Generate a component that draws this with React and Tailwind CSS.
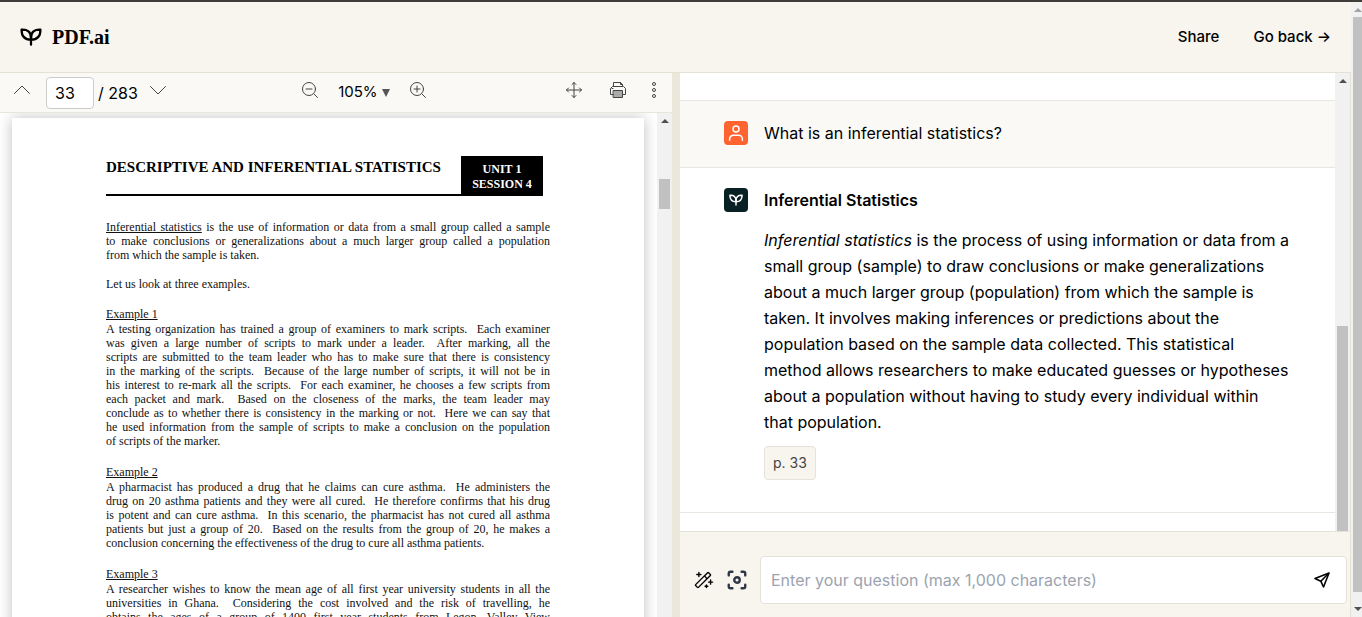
import { Focus } from 'lucide-react'
import { PiMagicWand } from 'react-icons/pi'

const intro = [
  'to make conclusions or generalizations about a much larger group called a population',
  'from which the sample is taken.',
]

const examples = [
  {
    title: 'Example 1',
    lines: [
      'A testing organization has trained a group of examiners to mark scripts.\u00a0 Each examiner',
      'was given a large number of scripts to mark under a leader.\u00a0 After marking, all the',
      'scripts are submitted to the team leader who has to make sure that there is consistency',
      'in the marking of the scripts.\u00a0 Because of the large number of scripts, it will not be in',
      'his interest to re-mark all the scripts.\u00a0 For each examiner, he chooses a few scripts from',
      'each packet and mark.\u00a0 Based on the closeness of the marks, the team leader may',
      'conclude as to whether there is consistency in the marking or not.\u00a0 Here we can say that',
      'he used information from the sample of scripts to make a conclusion on the population',
      'of scripts of the marker.',
    ],
    ends: true,
  },
  {
    title: 'Example 2',
    lines: [
      'A pharmacist has produced a drug that he claims can cure asthma.\u00a0 He administers the',
      'drug on 20 asthma patients and they were all cured.\u00a0 He therefore confirms that his drug',
      'is potent and can cure asthma.\u00a0 In this scenario, the pharmacist has not cured all asthma',
      'patients but just a group of 20.\u00a0 Based on the results from the group of 20, he makes a',
      'conclusion concerning the effectiveness of the drug to cure all asthma patients.',
    ],
    ends: true,
  },
  {
    title: 'Example 3',
    lines: [
      'A researcher wishes to know the mean age of all first year university students in all the',
      'universities in Ghana.\u00a0 Considering the cost involved and the risk of travelling, he',
      'obtains the ages of a group of 1400 first year students from Legon, Valley View',
    ],
    ends: false,
  },
]

function Sprout({ className }) {
  return (
    <svg viewBox="0 0 24 20" fill="none" stroke="currentColor" strokeWidth="2.5" strokeLinecap="round" strokeLinejoin="round" className={className}>
      <path d="M12 18.5V9" />
      <path d="M12 13C5 13 1.5 9.5 1.5 1.9C8 1.4 12 4.500 12 10.5" />
      <path d="M12 13C19 13 22.5 9.5 22.5 1.9C16 1.4 12 4.500 12 10.5" />
    </svg>
  )
}

function UserIcon() {
  return (
    <svg viewBox="0 0 24 24" fill="none" stroke="currentColor" strokeWidth="2" strokeLinecap="round" className="size-[18px]">
      <circle cx="12" cy="6.5" r="4" />
      <path d="M3.5 21.500V20a5 5 0 0 1 5-5h7a5 5 0 0 1 5 5v1.5" />
    </svg>
  )
}

function SendIcon() {
  return (
    <svg viewBox="0 0 16 16" fill="none" stroke="currentColor" strokeWidth="1.6" strokeLinejoin="round" className="size-4">
      <path d="M15 1L1 6.500L6.800 9.200L9.500 15Z" />
      <path d="M15 1L6.800 9.200" />
    </svg>
  )
}

function ToolIcon({ children }) {
  return (
    <svg viewBox="0 0 16 16" fill="none" stroke="currentColor" strokeWidth="1" strokeLinecap="round" strokeLinejoin="round" className="size-4">
      {children}
    </svg>
  )
}

function Arrow({ className }) {
  return (
    <svg viewBox="0 0 8 4" fill="currentColor" className={className}>
      <path d="M0 4L4 0L8 4Z" />
    </svg>
  )
}

function Line({ justify, children }) {
  return <span className={`block whitespace-nowrap ${justify ? '[text-align-last:justify]' : ''}`}>{children}</span>
}

function Header() {
  return (
    <header className="flex h-[71px] shrink-0 items-center justify-between border-b border-[#e5e2d5] bg-[#f8f5ee] px-5">
      <a href="#" className="flex items-center gap-2.5">
        <Sprout className="h-[18px] w-[22px]" />
        <span className="font-['Liberation_Serif',serif] text-[20px] font-bold">PDF.ai</span>
      </a>
      <nav className="flex items-center gap-[34px] text-[15px] font-medium">
        <a href="#">Share</a>
        <a href="#">Go back →</a>
      </nav>
    </header>
  )
}

function Toolbar() {
  return (
    <div className="flex h-10 shrink-0 items-center justify-between border-b border-[#e8e5da] bg-[#faf9f6] px-3.5 text-[#444]">
      <div className="flex items-center">
        <button aria-label="Previous page" className="pb-1.5">
          <ToolIcon><path d="M0.500 11.500L8 4L15.500 11.500" /></ToolIcon>
        </button>
        <input aria-label="Page" defaultValue="33" className="ml-4 h-8 w-12 rounded border border-[#ccc] bg-white px-2 text-black" />
        <span className="ml-1 text-black">/ 283</span>
        <button aria-label="Next page" className="ml-3 pb-1.5">
          <ToolIcon><path d="M0.500 4.500L8 12L15.500 4.500" /></ToolIcon>
        </button>
      </div>
      <div className="flex items-center pr-1">
        <button aria-label="Zoom out" className="pb-1.5">
          <ToolIcon><circle cx="7" cy="7" r="6.500" /><path d="M12 12L15.500 15.500M4 7H10" /></ToolIcon>
        </button>
        <button className="ml-5 flex items-center gap-1 text-[15px] text-black">
          105%
          <svg viewBox="0 0 8 8" fill="#555" className="size-2"><path d="M0 0H8L4 8Z" /></svg>
        </button>
        <button aria-label="Zoom in" className="ml-5 pb-1.5">
          <ToolIcon><circle cx="7" cy="7" r="6.500" /><path d="M12 12L15.500 15.500M4 7H10M7 4V10" /></ToolIcon>
        </button>
      </div>
      <div className="flex items-center">
        <button aria-label="Pan" className="pb-1.5">
          <ToolIcon><path d="M8 0.500V15.500M0.500 8H15.500M6 2.500L8 0.500L10 2.500M6 13.500L8 15.500L10 13.500M2.500 6L0.500 8L2.500 10M13.500 6L15.500 8L13.500 10" /></ToolIcon>
        </button>
        <button aria-label="Print" className="ml-7 pb-1.5">
          <ToolIcon>
            <path d="M3.500 4.500V0.500H10.500L12.500 2.500V4.500M10.500 0.500V2.500H12.500M3.500 12.500H0.500V6.500L2.500 4.500H13.500L15.500 6.500V12.500H12.500M2 6.500H3" />
            <path d="M3.500 8.500H12.500V15.500H3.500Z" fill="#aaa" />
          </ToolIcon>
        </button>
        <button aria-label="More" className="ml-6 pb-1.5">
          <svg viewBox="0 0 8 16" fill="none" stroke="currentColor" className="h-4 w-2">
            <circle cx="4" cy="2" r="1.500" />
            <circle cx="4" cy="8" r="1.500" />
            <circle cx="4" cy="14" r="1.500" />
          </svg>
        </button>
      </div>
    </div>
  )
}

function PdfPage() {
  return (
    <article className="ml-3 h-[900px] w-[632px] shrink-0 bg-white px-[94px] pt-[38px] font-['Liberation_Serif',serif] text-[12px] leading-[14px] text-[#111] shadow-[0_0_14px_rgba(0,0,0,0.25)]">
      <div className="mr-[7px] flex justify-between border-b-2 border-black">
        <h1 className="pt-1 text-[15px] font-bold text-black">DESCRIPTIVE AND INFERENTIAL STATISTICS</h1>
        <div className="w-[82px] bg-black pt-1.5 pb-0.5 text-center leading-[15px] font-bold text-white">
          UNIT 1<br />SESSION 4
        </div>
      </div>
      <p className="mt-6">
        <Line justify><u>Inferential statistics</u> is the use of information or data from a small group called a sample</Line>
        <Line justify>{intro[0]}</Line>
        <Line>{intro[1]}</Line>
      </p>
      <p className="my-[15px]">Let us look at three examples.</p>
      <div className="flex flex-col gap-4">
        {examples.map((ex) => (
          <section key={ex.title}>
            <h2 className="leading-4 underline">{ex.title}</h2>
            <p>
              {ex.lines.map((line, i) => (
                <Line key={line} justify={!ex.ends || i < ex.lines.length - 1}>{line}</Line>
              ))}
            </p>
          </section>
        ))}
      </div>
    </article>
  )
}

function Viewer() {
  return (
    <section className="flex min-w-0 flex-1 flex-col">
      <Toolbar />
      <div className="flex min-h-0 flex-1">
        <div className="min-w-0 flex-1 overflow-hidden pt-[5px]">
          <PdfPage />
        </div>
        <div className="flex w-[15px] flex-col items-center bg-[#f1f1f1] pt-1.5">
          <Arrow className="h-1 w-2 text-[#505050]" />
          <div className="mt-14 h-[30px] w-[11px] bg-[#c1c1c1]" />
        </div>
      </div>
    </section>
  )
}

function Chat() {
  return (
    <section className="flex w-[calc(50%-5px)] shrink-0 flex-col bg-white">
      <div className="flex min-h-0 flex-1">
        <div className="min-w-0 flex-1 overflow-hidden">
          <div className="h-7 border-b border-[#e8e6e1]" />
          <div className="flex items-center gap-4 border-b border-[#e8e6e1] bg-[#faf9f6] px-11 pt-5 pb-[22px]">
            <span className="flex size-6 shrink-0 items-center justify-center rounded-sm bg-[#ff6430] text-white">
              <UserIcon />
            </span>
            <p>What is an inferential statistics?</p>
          </div>
          <div className="flex gap-4 border-b border-[#e8e6e1] px-11 pt-5 pb-8">
            <span className="flex size-6 shrink-0 items-center justify-center rounded-sm bg-[#072125] text-white">
              <Sprout className="h-3 w-3.5" />
            </span>
            <div>
              <h2 className="font-semibold">Inferential Statistics</h2>
              <p className="mt-[15px] leading-[26px]">
                <em>Inferential statistics</em> is the process of using information or data from a small group (sample) to draw conclusions or make generalizations about a much larger group (population) from which the sample is taken. It involves making inferences or predictions about the population based on the sample data collected. This statistical method allows researchers to make educated guesses or hypotheses about a population without having to study every individual within that population.
              </p>
              <button className="mt-[11px] block rounded border border-[#e5e2d9] bg-[#f8f5ee] px-2 py-1.5 text-sm text-[#444]">p. 33</button>
            </div>
          </div>
        </div>
        <div className="flex w-[15px] flex-col items-center justify-between bg-[#f1f1f1] pt-1.5">
          <Arrow className="h-1 w-2 text-[#505050]" />
          <div className="h-[205px] w-[11px] bg-[#c1c1c1]" />
        </div>
      </div>
      <form className="flex h-[86px] shrink-0 items-center gap-3 border-t border-[#e5e2d9] bg-[#f8f5ee] pt-3.5 pr-[3px] pb-1 pl-3">
        <button type="button" aria-label="Prompts"><PiMagicWand className="size-[22px]" /></button>
        <button type="button" aria-label="Capture" className="text-[#2d3748]"><Focus strokeWidth={2.6} className="size-[22px]" /></button>
        <div className="flex h-12 flex-1 items-center rounded border border-[#e5e2d9] bg-white pr-4 pl-2.5">
          <input aria-label="Question" placeholder="Enter your question (max 1,000 characters)" className="min-w-0 flex-1 outline-none placeholder:text-[#9ca3af]" />
          <button type="button" aria-label="Send"><SendIcon /></button>
        </div>
      </form>
    </section>
  )
}

export default function App() {
  return (
    <div className="flex h-screen overflow-hidden border-t-2 border-[#3f3c39] bg-white font-['Inter',sans-serif] text-[16px] text-black">
      <div className="flex min-w-0 flex-1 flex-col">
        <Header />
        <main className="flex min-h-0 flex-1 border-r border-[#e5e2d5]">
          <Viewer />
          <div className="w-2 shrink-0 bg-[#ebe7db]" />
          <Chat />
        </main>
      </div>
      <div className="flex w-[11px] shrink-0 flex-col items-end justify-between bg-[#f1f1f1] py-1.5">
        <Arrow className="h-1 w-2 text-[#a3a3a3]" />
        <div className="my-[5px] w-[9px] flex-1 bg-[#c1c1c1]" />
        <Arrow className="mt-2.5 h-1 w-2 rotate-180 text-[#505050]" />
      </div>
    </div>
  )
}
